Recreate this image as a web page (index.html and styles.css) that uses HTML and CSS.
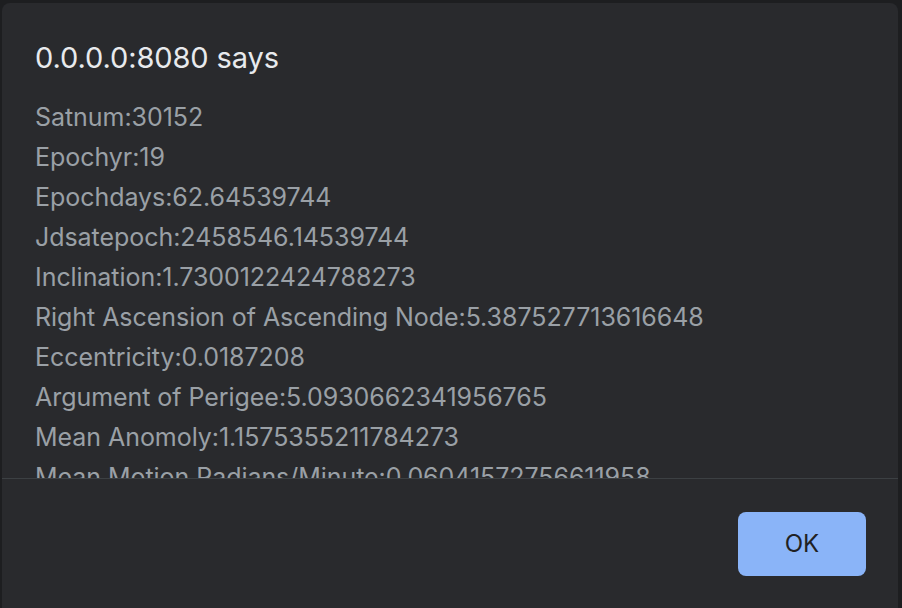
FILE: index.html
```html
<!DOCTYPE html>
<html>
<head>
<meta charset="utf-8">
<link rel="stylesheet" href="styles.css">
</head>
<body>
<div class="dialog">
  <div class="title">0.0.0.0:8080 says</div>
  <div class="content">
    <div class="line">Satnum:30152</div>
    <div class="line">Epochyr:19</div>
    <div class="line">Epochdays:62.64539744</div>
    <div class="line">Jdsatepoch:2458546.14539744</div>
    <div class="line">Inclination:1.7300122424788273</div>
    <div class="line">Right Ascension of Ascending Node:5.387527713616648</div>
    <div class="line">Eccentricity:0.0187208</div>
    <div class="line">Argument of Perigee:5.0930662341956765</div>
    <div class="line">Mean Anomoly:1.1575355211784273</div>
    <div class="line">Mean Motion Radians/Minute:0.06041572756611958</div>
  </div>
  <div class="footer">
    <button class="ok">OK</button>
  </div>
</div>
</body>
</html>
```
FILE: styles.css
```css
html, body {
  margin: 0;
  padding: 0;
  background: #1d1e20;
  height: 100%;
  overflow: hidden;
}
.dialog {
  margin: 3px 4px 0 2px;
  height: 605px;
  background: #292a2d;
  border-radius: 8px 8px 0 0;
  display: flex;
  flex-direction: column;
  font-family: Inter, "Noto Sans", sans-serif;
}
.title {
  color: #e8eaed;
  font-size: 29px;
  padding: 37px 0 0 33px;
  line-height: 36px;
  height: 57px;
  letter-spacing: -0.1px;
}
.content {
  color: #9aa0a6;
  font-size: 25px;
  line-height: 40px;
  padding-left: 33px;
  height: 381px;
  overflow: hidden;
  letter-spacing: -0.05px;
}
.footer {
  border-top: 1px solid #3c4043;
  display: flex;
  justify-content: flex-end;
  padding: 33px 32px 0 0;
}
.ok {
  width: 128px;
  height: 64px;
  border: none;
  border-radius: 8px;
  background: #8ab4f8;
  color: #202124;
  font-family: Inter, "Noto Sans", sans-serif;
  font-size: 24px;
  padding: 0 0 2px 0;
}
```
